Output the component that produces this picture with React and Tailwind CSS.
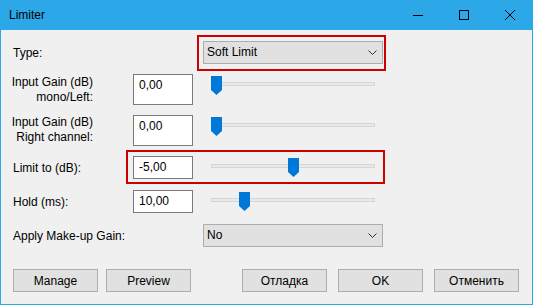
import React from "react";

const Thumb = () => (
  <svg width="11" height="19" viewBox="0 0 11 19" className="block">
    <path d="M0 0H11V14L5.5 19L0 14Z" fill="#0078d7" />
  </svg>
);

const Slider = ({ pos }) => (
  <div className="relative w-[164px] h-[19px] ml-[18px] mt-[2px]">
    <div className="absolute left-0 right-0 top-[6px] h-[4px] bg-[#e7eaea] border border-[#d6d6d6]" />
    <div className="absolute top-0" style={{ left: pos }}>
      <Thumb />
    </div>
  </div>
);

const Chevron = () => (
  <svg width="9" height="5" viewBox="0 0 9 5" className="block">
    <path d="M0.5 0.5L4.5 4.5L8.5 0.5" fill="none" stroke="#333" strokeWidth="1" />
  </svg>
);

const Combo = ({ text }) => (
  <div className="w-[180px] h-[23px] bg-[#e1e1e1] border border-[#adadad] flex items-center pl-[3px] pr-[5px]">
    <span className="flex-1 leading-[15px]">{text}</span>
    <Chevron />
  </div>
);

const Field = ({ value, tall }) => (
  <div
    className={
      "w-[60px] bg-white border border-[#7a7a7a] pl-[5px] leading-[15px] " +
      (tall ? "h-[31px] pt-[3px]" : "h-[23px] pt-[3px]")
    }
  >
    {value}
  </div>
);

const Btn = ({ children, className = "" }) => (
  <div
    className={
      "w-[85px] h-[23px] bg-[#e1e1e1] border border-[#adadad] flex items-center justify-center " +
      className
    }
  >
    {children}
  </div>
);

const TwoLine = ({ a, b, className = "" }) => (
  <div className={"w-[120px] " + className}>
    <div className="w-[80px] flex flex-col items-end leading-[15px] whitespace-nowrap">
      <span>{a}</span>
      <span>{b}</span>
    </div>
  </div>
);

export default function App() {
  return (
    <div
      className="w-[533px] h-[305px] flex flex-col text-[12px] text-black"
      style={{ fontFamily: '"Liberation Sans", Arial, sans-serif' }}
    >
      {/* Title bar */}
      <div className="h-[30px] bg-[#2ca7e8] flex items-center shrink-0">
        <span className="pl-[9px] flex-1 text-[12px]">Limiter</span>
        <div className="w-[46px] h-full flex items-center justify-center">
          <svg width="10" height="10" viewBox="0 0 10 10" className="block">
            <path d="M0 5.5H10" stroke="#000" strokeWidth="1" />
          </svg>
        </div>
        <div className="w-[46px] h-full flex items-center justify-center">
          <svg width="10" height="10" viewBox="0 0 10 10" className="block">
            <rect x="0.5" y="0.5" width="9" height="9" fill="none" stroke="#000" strokeWidth="1" />
          </svg>
        </div>
        <div className="w-[46px] h-full flex items-center justify-center">
          <svg width="10" height="10" viewBox="0 0 10 10" className="block">
            <path d="M0 0L10 10M10 0L0 10" stroke="#000" strokeWidth="1" />
          </svg>
        </div>
      </div>

      {/* Body */}
      <div className="relative flex-1 bg-[#f0f0f0] border-x border-b border-[#2ca7e8] pl-[12px] flex flex-col">
        {/* Type */}
        <div className="flex items-center h-[23px] mt-[11px]">
          <div className="w-[190px]">Type:</div>
          <Combo text="Soft Limit" />
        </div>

        {/* Input Gain left */}
        <div className="flex h-[31px] mt-[10px]">
          <TwoLine a="Input Gain (dB)" b="mono/Left:" className="pt-[1px]" />
          <Field value="0,00" tall />
          <Slider pos={0} />
        </div>

        {/* Input Gain right */}
        <div className="flex h-[31px] mt-[10px]">
          <TwoLine a="Input Gain (dB)" b="Right channel:" />
          <Field value="0,00" tall />
          <Slider pos={0} />
        </div>

        {/* Limit */}
        <div className="flex h-[23px] mt-[10px]">
          <div className="w-[120px] flex items-center">Limit to (dB):</div>
          <Field value="-5,00" />
          <Slider pos={77} />
        </div>

        {/* Hold */}
        <div className="flex h-[23px] mt-[11px]">
          <div className="w-[120px] flex items-center">Hold (ms):</div>
          <Field value="10,00" />
          <Slider pos={28} />
        </div>

        {/* Make-up gain */}
        <div className="flex items-center h-[23px] mt-[11px]">
          <div className="w-[190px]">Apply Make-up Gain:</div>
          <Combo text="No" />
        </div>

        {/* Buttons */}
        <div className="flex h-[23px] mt-[22px]">
          <Btn>Manage</Btn>
          <Btn className="ml-[8px]">Preview</Btn>
          <Btn className="ml-[51px]">Отладка</Btn>
          <Btn className="ml-[11px]">OK</Btn>
          <Btn className="ml-[11px]">Отменить</Btn>
        </div>

        {/* Highlight overlays */}
        <div className="absolute left-[196px] top-[5px] w-[189px] h-[36px] border-2 border-[#cc0000] pointer-events-none" />
        <div className="absolute left-[125px] top-[120px] w-[259px] h-[34px] border-2 border-[#cc0000] pointer-events-none" />
      </div>
    </div>
  );
}
